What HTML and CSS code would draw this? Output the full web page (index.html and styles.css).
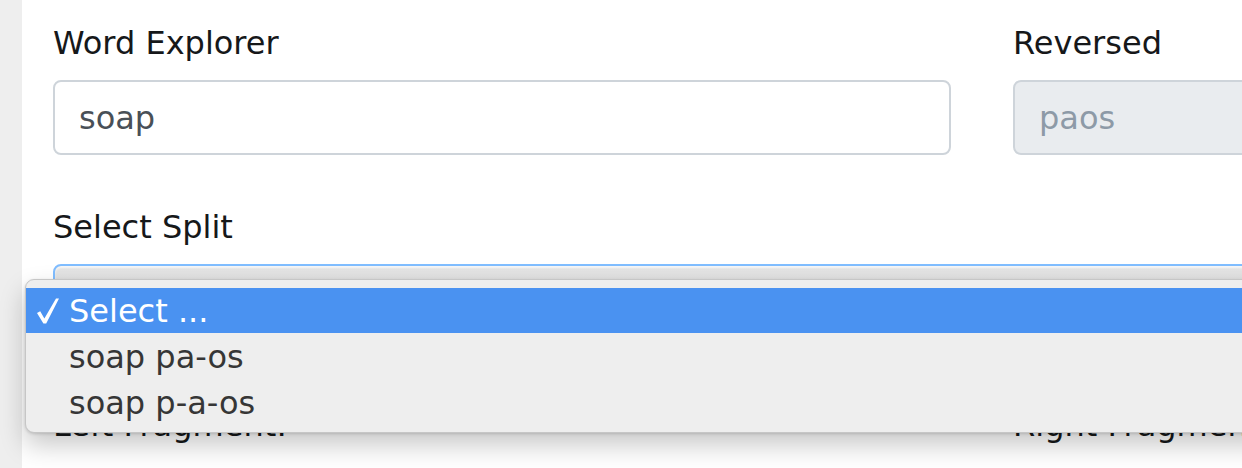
FILE: index.html
```html
<!DOCTYPE html>
<html lang="en">

<head>
    <meta charset="UTF-8">
    <meta name="viewport" content="width=device-width, initial-scale=1.0">
    <title>Word Explorer</title>

    <link rel="stylesheet" href="styles.css">
</head>

<body>
    <div class="page">
        <div class="rail"></div>

        <div class="content">
            <div class="row">
                <div class="group col-word">
                    <label for="word">Word Explorer</label>
                    <input id="word" class="field" type="text" value="soap">
                </div>
                <div class="group col-rev">
                    <label for="rev">Reversed</label>
                    <input id="rev" class="field field-off" type="text" value="paos" readonly>
                </div>
            </div>

            <div class="group split">
                <label>Select Split</label>
                <div class="select"></div>
            </div>

            <div class="row frag">
                <div class="group col-word">
                    <label>Left Fragment:</label>
                </div>
                <div class="group col-rev">
                    <label>Right Fragment:</label>
                </div>
            </div>
        </div>

        <!-- native select popup, open -->
        <ul class="popup">
            <li class="on">
                <span class="tick">
                    <svg width="22" height="26" viewBox="0 0 22 26">
                        <path d="M0 15 L3.2 13.2 L7.4 20.6 L19 0.5 L22 0.5 L9.2 25.5 L6.4 25.5 Z" fill="#fff" />
                    </svg>
                </span>Select ...
            </li>
            <li><span class="tick"></span>soap pa-os</li>
            <li><span class="tick"></span>soap p-a-os</li>
        </ul>
    </div>
</body>

</html>
```

FILE: styles.css
```css
* {
    margin: 0;
    padding: 0;
    box-sizing: border-box
}

ul {
    list-style: none
}

body {
    font-family: "DejaVu Sans", Verdana, sans-serif;
    color: #16181a;
    background: #fff;
}

.page {
    position: relative;
    display: flex;
    height: 468px;
    overflow: hidden;
}

.rail {
    flex: none;
    width: 22px;
    background: #eeeeee;
}

.content {
    flex: none;
    width: 1380px;
    padding: 19px 0 0 31px;
}

.row {
    display: flex;
    gap: 62px;
}

.col-word {
    flex: none;
    width: 898px;
}

.col-rev {
    flex: 1;
}

label {
    display: block;
    font-size: 32px;
    line-height: 48px;
    margin-bottom: 13px;
}

.field {
    display: block;
    width: 100%;
    height: 75px;
    padding: 0 24px;
    font-family: inherit;
    font-size: 32px;
    color: #495057;
    background: #fff;
    border: 2px solid #ced4da;
    border-radius: 8px;
    outline: none;
}

.field-off {
    color: #8d9aa7;
    background: #e9ecef;
}

.split {
    margin-top: 48px;
}

.select {
    height: 75px;
    border: 2px solid #80bdff;
    border-radius: 8px;
    background: linear-gradient(#e4e4e4, #d9d9d9);
    box-shadow: inset 0 2px 2px rgba(255, 255, 255, 0.7);
}

.frag {
    margin-top: 62px;
}

.popup {
    position: absolute;
    left: 25px;
    top: 279px;
    right: -30px;
    height: 154px;
    padding: 8px 0 6px;
    background: #eeeeee;
    border: 1px solid #c6c6c6;
    border-radius: 9px;
    box-shadow: 0 12px 26px rgba(0, 0, 0, 0.22), 0 1px 3px rgba(0, 0, 0, 0.15);
    z-index: 10;
}

.popup li {
    display: flex;
    align-items: center;
    height: 46px;
    padding-left: 11px;
    font-size: 32px;
    line-height: 46px;
    color: #363636;
}

.popup li.on {
    height: 45px;
    margin-bottom: 1px;
    color: #fff;
    background: #4a92f1;
}

.tick {
    display: flex;
    align-items: center;
    width: 32px;
    height: 46px;
}

.tick svg {
    display: block;
}
```
